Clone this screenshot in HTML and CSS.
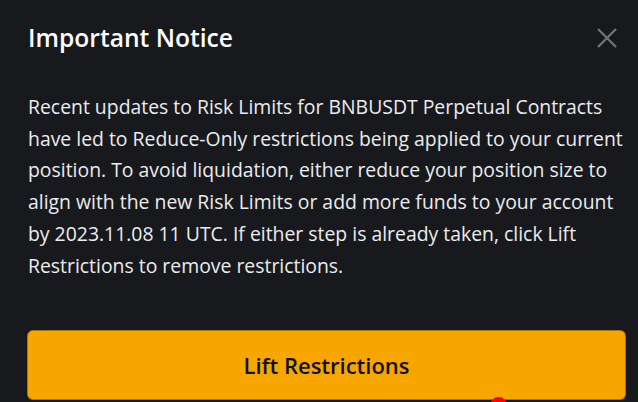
FILE: index.html
```html
<!DOCTYPE html>
<html lang="en">
<head>
  <meta charset="UTF-8">
  <meta name="viewport" content="width=device-width, initial-scale=1.0">
  <title>Important Notice</title>
  <link rel="stylesheet" href="styles.css">
</head>
<body>
  <div class="modal">
    <div class="modal-header">
      <h2 class="modal-title">Important Notice</h2>
      <button class="close-btn" aria-label="Close">
        <svg width="20" height="20" viewBox="0 0 20 20">
          <path d="M1 1 L19 19 M19 1 L1 19" stroke="currentColor" stroke-width="2.2" fill="none"/>
        </svg>
      </button>
    </div>

    <p class="modal-text">
      Recent updates to Risk Limits for BNBUSDT Perpetual Contracts<br>
      have led to Reduce-Only restrictions being applied to your current<br>
      position. To avoid liquidation, either reduce your position size to<br>
      align with the new Risk Limits or add more funds to your account<br>
      by 2023.11.08 11 UTC. If either step is already taken, click Lift<br>
      Restrictions to remove restrictions.
    </p>

    <button class="primary-btn">Lift Restrictions</button>
  </div>

  <div class="red-dot"></div>
</body>
</html>
```

FILE: styles.css
```css
html, body {
  margin: 0;
  height: 100%;
  overflow: hidden;
}

body {
  background-color: #18191c;
  font-family: "Open Sans", "Noto Sans", Arial, sans-serif;
  color: #eaecef;
}

.modal {
  padding: 20px 12px 0 27px;
}

.modal-header {
  display: flex;
  justify-content: space-between;
  align-items: center;
}

.modal-title {
  margin: 0;
  padding-left: 1px;
  font-size: 24.6px;
  font-weight: 600;
  line-height: 36px;
  color: #ffffff;
}

.close-btn {
  margin-right: 9px;
  padding: 0;
  width: 20px;
  height: 20px;
  background: none;
  border: none;
  color: #737579;
  cursor: pointer;
}

.close-btn svg {
  display: block;
}

.modal-text {
  margin: 35px 0 0;
  padding-left: 1px;
  font-size: 19.4px;
  line-height: 31.7px;
  white-space: nowrap;
}

.primary-btn {
  display: block;
  box-sizing: border-box;
  width: 100%;
  height: 70px;
  margin-top: 49px;
  background-color: #f7a600;
  border: 1px solid rgba(0, 0, 0, 0.3);
  border-radius: 6px;
  font-family: inherit;
  font-size: 22px;
  font-weight: 600;
  color: #121214;
  cursor: pointer;
}

.red-dot {
  position: absolute;
  left: 490px;
  top: 397px;
  width: 17px;
  height: 17px;
  border-radius: 50%;
  background-color: #ff0000;
}
```
